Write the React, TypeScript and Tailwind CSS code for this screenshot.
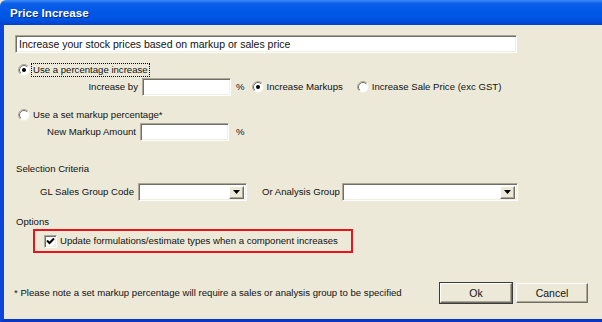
import { ReactNode } from 'react';

// classic sunken edit field
function Edit({ className = '', children }: { className?: string; children?: ReactNode }) {
  return (
    <div
      className={`relative h-[18px] bg-white border border-t-[#aca899] border-l-[#aca899] border-b-white border-r-white shadow-[inset_1px_1px_0_#716f64,inset_-1px_-1px_0_#f1efe2] flex items-center ${className}`}
    >
      {children}
    </div>
  );
}

function Combo({ className = '' }: { className?: string }) {
  return (
    <Edit className={`justify-end pr-[2px] ${className}`}>
      <div className="w-[15px] h-[13px] bg-[#ece9d8] border border-t-white border-l-white border-b-[#716f64] border-r-[#716f64] shadow-[inset_-1px_-1px_0_#aca899] flex items-center justify-center">
        <svg width="7" height="4" viewBox="0 0 7 4">
          <path d="M0 0h7L3.5 4z" fill="#000" />
        </svg>
      </div>
    </Edit>
  );
}

function Radio({ checked = false }: { checked?: boolean }) {
  return (
    <svg width="12" height="12" viewBox="0 0 12 12" className="shrink-0">
      <circle cx="6" cy="6" r="5.5" fill="#fff" stroke="#f1efe2" />
      <path d="M9.9 2.1A5.5 5.5 0 0 0 2.1 9.9" fill="none" stroke="#aca899" />
      <path d="M9.2 2.8A4.5 4.5 0 0 0 2.8 9.2" fill="none" stroke="#716f64" />
      {checked && <circle cx="6" cy="6" r="2" fill="#000" />}
    </svg>
  );
}

function Checkbox({ checked = false }: { checked?: boolean }) {
  return (
    <div className="w-[13px] h-[13px] shrink-0 bg-white border border-t-[#aca899] border-l-[#aca899] border-b-white border-r-white shadow-[inset_1px_1px_0_#716f64,inset_-1px_-1px_0_#f1efe2] flex items-center justify-center">
      {checked && (
        <svg width="9" height="9" viewBox="0 0 9 9">
          <path d="M1 3.5l2.5 2.5L8 1.5" fill="none" stroke="#000" strokeWidth="2" />
        </svg>
      )}
    </div>
  );
}

function Button({ children, primary }: { children: ReactNode; primary?: boolean }) {
  return (
    <div
      className={`w-[72px] h-[20px] flex items-center justify-center bg-[#ece9d8] text-[10.5px] ${
        primary ? 'outline outline-1 outline-[#3c3c3c]' : ''
      } border border-t-white border-l-white border-b-[#716f64] border-r-[#716f64] shadow-[inset_-1px_-1px_0_#aca899]`}
    >
      {children}
    </div>
  );
}

export default function App() {
  return (
    <div className="w-[602px] h-[322px] overflow-hidden flex flex-col bg-[#ece9d8] font-['Liberation_Sans',Arial,sans-serif] text-[9.6px] text-[#111] leading-none whitespace-nowrap">
      {/* Title bar */}
      <div className="h-[25px] shrink-0 flex items-center pl-[10px] rounded-tl-[6px] bg-[linear-gradient(to_bottom,#3d8cf7_0%,#0c5fe9_14%,#0058e6_45%,#0052e0_80%,#0041cf_100%)]">
        <span className="font-bold text-[11.6px] text-white [text-shadow:1px_1px_0_#0b2a8f]">
          Price Increase
        </span>
      </div>

      {/* Client area */}
      <div className="flex-1 flex flex-col border-l-[4px] border-l-[#0b45d9] border-b-[3px] border-b-[#0737c4]">
        <div className="flex-1 flex flex-col pl-[11px]">
          <Edit className="mt-[10px] w-[502px] pl-[3px] text-[10.5px]">
            Increase your stock prices based on markup or sales price
          </Edit>

          {/* Percentage increase */}
          <div className="mt-[10px] h-[14px] flex items-center pl-[3px]">
            <Radio checked />
            <span className="ml-[1px] px-[1px] py-[1px] border border-dotted border-black">
              Use a percentage increase
            </span>
          </div>
          <div className="mt-[1px] flex items-center">
            <span className="w-[123px] text-right">Increase by</span>
            <Edit className="ml-[4px] w-[89px]" />
            <span className="ml-[5px]">%</span>
            <div className="ml-[7px] flex items-center gap-[3px]">
              <Radio checked />
              <span>Increase Markups</span>
            </div>
            <div className="ml-[14px] flex items-center gap-[3px]">
              <Radio />
              <span>Increase Sale Price (exc GST)</span>
            </div>
          </div>

          {/* Set markup */}
          <div className="mt-[12px] h-[14px] flex items-center pl-[3px] gap-[3px]">
            <Radio />
            <span>Use a set markup percentage*</span>
          </div>
          <div className="mt-[1px] flex items-center">
            <span className="w-[121px] text-right">New Markup Amount</span>
            <Edit className="ml-[4px] w-[89px]" />
            <span className="ml-[7px]">%</span>
          </div>

          {/* Selection criteria */}
          <div className="mt-[21px] h-[14px] flex items-center pl-[1px]">Selection Criteria</div>
          <div className="mt-[7px] flex items-center">
            <span className="w-[119px] text-right">GL Sales Group Code</span>
            <Combo className="ml-[4px] w-[109px]" />
            <span className="ml-[15px] w-[76px]">Or Analysis Group</span>
            <Combo className="ml-[4px] w-[176px]" />
          </div>

          {/* Options */}
          <div className="mt-[14px] h-[14px] flex items-center pl-[1px]">Options</div>
          <div className="ml-[18px] w-[320px] h-[24px] border-2 border-[#e8141c] flex items-center pl-[9px] gap-[3px]">
            <Checkbox checked />
            <span>Update formulations/estimate types when a component increases</span>
          </div>

          {/* Footer */}
          <div className="mt-[30px] flex items-center pr-[14px]">
            <span className="-ml-[1px]">
              * Please note a set markup percentage will require a sales or analysis group to be specified
            </span>
            <div className="ml-auto flex gap-[4px]">
              <Button primary>Ok</Button>
              <Button>Cancel</Button>
            </div>
          </div>
        </div>
      </div>
    </div>
  );
}
